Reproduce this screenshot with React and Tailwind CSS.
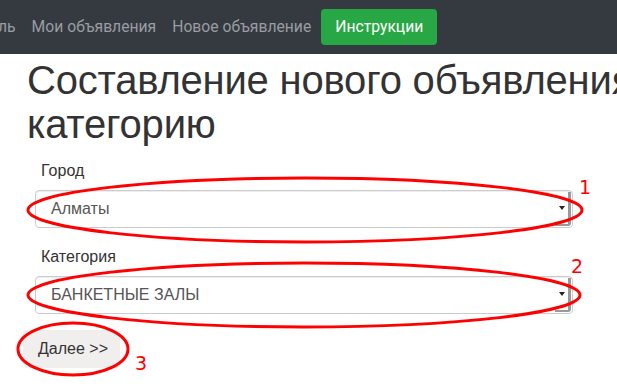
import React from "react";

function SelectBox({ value }) {
  return (
    <div className="relative h-[38px] w-[538px] rounded-[4px] border border-[#ccc] bg-white shadow-[inset_0_1px_1px_rgba(0,0,0,0.075)] flex items-center pl-[15px] text-[16px] text-[#555]" style={{ fontFamily: '"Liberation Sans", Arial, sans-serif' }}>
      <span>{value}</span>
      <div className="absolute right-[1px] top-[1px] bottom-[1px] w-[16px] flex items-center justify-center border-r-[3px] border-b-[2px] border-r-[#999] border-b-[#999] rounded-br-[3px]">
        <div className="w-0 h-0 border-l-[3px] border-r-[3px] border-t-[4px] border-l-transparent border-r-transparent border-t-[#222]" />
      </div>
    </div>
  );
}

export default function App() {
  const sans = { fontFamily: '"Liberation Sans", Arial, sans-serif' };
  return (
    <div className="relative w-[617px] h-[388px] overflow-hidden bg-white" style={sans}>
      <nav className="h-[54px] bg-[#343a40] flex items-center text-[15.7px] text-[#9a9da1] whitespace-nowrap" style={{ fontFamily: 'Roboto, sans-serif' }}>
        <span className="ml-[-2px]">ль</span>
        <span className="ml-[16px]">Мои объявления</span>
        <span className="ml-[16px]">Новое объявление</span>
        <span className="ml-[10px] h-[36px] px-[14px] flex items-center rounded-[4px] bg-[#28a745] text-white">Инструкции</span>
      </nav>
      <div className="pl-[27px]">
        <h1 className="w-[700px] mt-[4px] text-[40px] leading-[44px] text-[#333] tracking-[-0.2px]" style={sans}>
          Составление нового объявления в категорию
        </h1>
      </div>
      <div className="pl-[35px] pt-[14px] flex flex-col">
        <label className="ml-[6px] text-[16px] leading-[22px] text-[#333]">Город</label>
        <div className="mt-[8px]"><SelectBox value="Алматы" /></div>
        <label className="ml-[6px] mt-[18px] text-[16px] leading-[22px] text-[#333]">Категория</label>
        <div className="mt-[8px]"><SelectBox value="БАНКЕТНЫЕ ЗАЛЫ" /></div>
      </div>
      <div className="pl-[23px] mt-[16px]">
        <button className="h-[38px] w-[97px] rounded-[4px] bg-[#f0efee] text-[16px] text-[#333] flex items-center pl-[15px]" style={sans}>Далее &gt;&gt;</button>
      </div>

      <svg className="absolute left-0 top-0 pointer-events-none" width="617" height="388">
        <ellipse cx="305" cy="210" rx="277" ry="32" fill="none" stroke="#ff0000" strokeWidth="3" />
        <ellipse cx="304" cy="295" rx="276" ry="32" fill="none" stroke="#ff0000" strokeWidth="3" />
        <ellipse cx="73" cy="349" rx="55" ry="26" fill="none" stroke="#ff0000" strokeWidth="3" />
      </svg>
      <span className="absolute left-[579px] top-[173px] text-[19px] text-[#ff0000]" style={{ fontFamily: '"DejaVu Sans", sans-serif' }}>1</span>
      <span className="absolute left-[571px] top-[252px] text-[19px] text-[#ff0000]" style={{ fontFamily: '"DejaVu Sans", sans-serif' }}>2</span>
      <span className="absolute left-[135px] top-[349px] text-[19px] text-[#ff0000]" style={{ fontFamily: '"DejaVu Sans", sans-serif' }}>3</span>
    </div>
  );
}
